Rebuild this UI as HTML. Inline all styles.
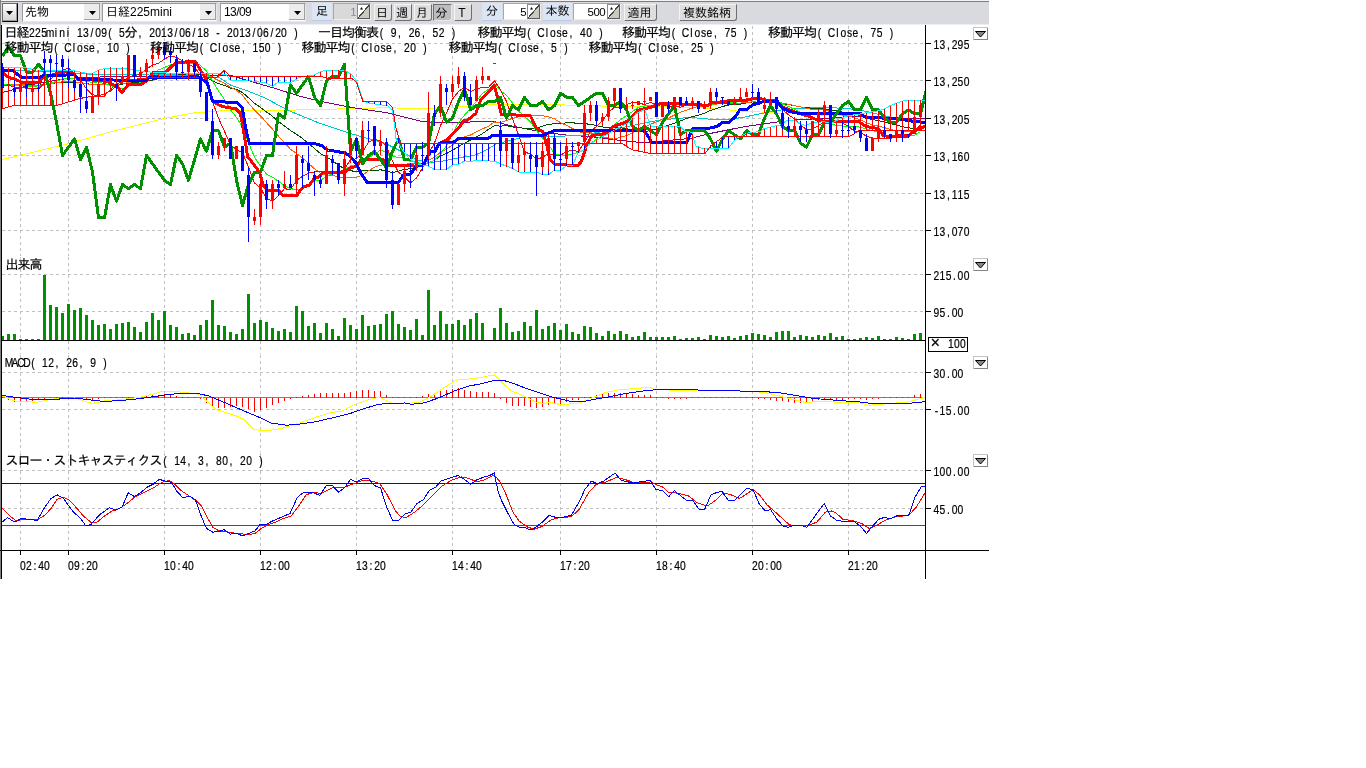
<!DOCTYPE html><html lang="ja"><head><meta charset="utf-8"><title>日経225mini チャート</title><style>
html,body{margin:0;padding:0;background:#fff;}
body{width:1366px;height:768px;overflow:hidden;position:relative;font-family:"Liberation Sans","IPAPGothic","Noto Sans CJK JP",sans-serif;}
svg{position:absolute;left:0;top:0;}
body>svg,#tb{will-change:transform;}
text.t{font-family:"Liberation Mono","IPAGothic","Noto Sans CJK JP",monospace;font-size:12px;fill:#000;stroke:#000;stroke-width:.2px;}
text.a{font-family:"Liberation Sans","IPAGothic",sans-serif;}
text.j{font-size:13px;}
#tb{position:absolute;left:0;top:0;width:989px;box-shadow:inset 1px 0 0 #808080;height:25px;background:linear-gradient(#f4f4f4 0,#f4f4f4 1px,#7d7d7d 1px,#7d7d7d 2px,#d8dadf 2px,#d8dadf 24px,#eceef1 24px,#eceef1 25px);box-sizing:border-box;font-size:12px;line-height:16px;color:#000;}
#tb div{position:absolute;box-sizing:border-box;white-space:nowrap;}
#tb div span{position:absolute;top:0;}
.btn0{background:linear-gradient(#fff,#d4d4d4);border:1px solid #6a6a6a;border-right-color:#000;border-bottom-color:#000;box-shadow:inset -1px -1px 0 #9a9a9a;}
svg.tri{position:absolute;}
.combo{background:#fff;border:1px solid #9a9a9a;border-right-color:#e8e8e8;border-bottom-color:#e8e8e8;}
.combo span{top:0.5px;font-size:12px;}
.combo .cb{position:absolute;right:0;top:0;width:16px;height:16px;background:#ececec;border-right:1px solid #a0a0a0;border-bottom:1px solid #a0a0a0;box-sizing:border-box;}
.lbl{top:3px;height:18px;background:#dbe5f3;border-bottom:1px solid #b9cbe6;}
.lbl span{top:1px;}
.spin{top:3px;height:17px;background:#fff;border:1px solid #a8a8a8;border-right-color:#eee;border-bottom-color:#eee;}
.spin.dis{background:#d9d9d9;color:#8c8c8c;}
.spin span{top:-1px;font-family:"Liberation Sans",sans-serif;letter-spacing:-.6px;font-size:11.5px;}
.spin .sb{position:absolute;right:0;top:0;width:13px;height:15px;box-sizing:border-box;border:1px solid #8a8a8a;border-right-color:#5a5a5a;border-bottom-color:#5a5a5a;
 background:linear-gradient(to bottom right,#fff 0,#fff 47%,#444 47%,#444 54%,#cbc8c0 54%,#cbc8c0 100%);}
.btn{top:4px;height:17px;background:#dedede;border:1px solid #f4f4f4;border-right:1px solid #6e6e6e;border-bottom:1px solid #6e6e6e;border-radius:0 0 3px 0;text-align:center;}
.btn span{left:0;right:2px;top:-2px;}
.btn.pr{background:#bdbdbd;border:1px solid #6e6e6e;border-right-color:#e8e8e8;border-bottom-color:#e8e8e8;}
</style></head><body><svg width="1366" height="768" viewBox="0 0 1366 768"><defs><clipPath id="cp"><rect x="2" y="25" width="923" height="525"/></clipPath></defs><g stroke="#c0c0c0" stroke-width="1" stroke-dasharray="3 3" shape-rendering="crispEdges">
<line x1="20.5" y1="26" x2="20.5" y2="256"/>
<line x1="20.5" y1="257" x2="20.5" y2="354"/>
<line x1="20.5" y1="355" x2="20.5" y2="452"/>
<line x1="20.5" y1="453" x2="20.5" y2="550"/>
<line x1="68.5" y1="26" x2="68.5" y2="256"/>
<line x1="68.5" y1="257" x2="68.5" y2="354"/>
<line x1="68.5" y1="355" x2="68.5" y2="452"/>
<line x1="68.5" y1="453" x2="68.5" y2="550"/>
<line x1="164.5" y1="26" x2="164.5" y2="256"/>
<line x1="164.5" y1="257" x2="164.5" y2="354"/>
<line x1="164.5" y1="355" x2="164.5" y2="452"/>
<line x1="164.5" y1="453" x2="164.5" y2="550"/>
<line x1="260.5" y1="26" x2="260.5" y2="256"/>
<line x1="260.5" y1="257" x2="260.5" y2="354"/>
<line x1="260.5" y1="355" x2="260.5" y2="452"/>
<line x1="260.5" y1="453" x2="260.5" y2="550"/>
<line x1="356.5" y1="26" x2="356.5" y2="256"/>
<line x1="356.5" y1="257" x2="356.5" y2="354"/>
<line x1="356.5" y1="355" x2="356.5" y2="452"/>
<line x1="356.5" y1="453" x2="356.5" y2="550"/>
<line x1="452.5" y1="26" x2="452.5" y2="256"/>
<line x1="452.5" y1="257" x2="452.5" y2="354"/>
<line x1="452.5" y1="355" x2="452.5" y2="452"/>
<line x1="452.5" y1="453" x2="452.5" y2="550"/>
<line x1="560.5" y1="26" x2="560.5" y2="256"/>
<line x1="560.5" y1="257" x2="560.5" y2="354"/>
<line x1="560.5" y1="355" x2="560.5" y2="452"/>
<line x1="560.5" y1="453" x2="560.5" y2="550"/>
<line x1="656.5" y1="26" x2="656.5" y2="256"/>
<line x1="656.5" y1="257" x2="656.5" y2="354"/>
<line x1="656.5" y1="355" x2="656.5" y2="452"/>
<line x1="656.5" y1="453" x2="656.5" y2="550"/>
<line x1="752.5" y1="26" x2="752.5" y2="256"/>
<line x1="752.5" y1="257" x2="752.5" y2="354"/>
<line x1="752.5" y1="355" x2="752.5" y2="452"/>
<line x1="752.5" y1="453" x2="752.5" y2="550"/>
<line x1="848.5" y1="26" x2="848.5" y2="256"/>
<line x1="848.5" y1="257" x2="848.5" y2="354"/>
<line x1="848.5" y1="355" x2="848.5" y2="452"/>
<line x1="848.5" y1="453" x2="848.5" y2="550"/>
<line x1="2" y1="43.5" x2="925" y2="43.5"/>
<line x1="2" y1="80.5" x2="925" y2="80.5"/>
<line x1="2" y1="118.5" x2="925" y2="118.5"/>
<line x1="2" y1="155.5" x2="925" y2="155.5"/>
<line x1="2" y1="193.5" x2="925" y2="193.5"/>
<line x1="2" y1="230.5" x2="925" y2="230.5"/>
<line x1="2" y1="274.5" x2="925" y2="274.5"/>
<line x1="2" y1="311.5" x2="925" y2="311.5"/>
<line x1="2" y1="372.5" x2="925" y2="372.5"/>
<line x1="2" y1="409.5" x2="925" y2="409.5"/>
<line x1="2" y1="470.5" x2="925" y2="470.5"/>
<line x1="2" y1="508.5" x2="925" y2="508.5"/>
</g>
<g shape-rendering="crispEdges" stroke-linejoin="round">
<polyline points="0,160 61.5,145.5 112.5,131.4 165.3,118.2 193.4,113 228.6,110.3 282.7,110.3 318,109.5 353,108.6 388,107.7 423.4,109 449.8,107.7 470,106 495,104.2 530,104.2 565.5,105 600.6,106 635.8,106.8 671,106.8 700,107.7 725,109.5 742.7,111.2 760.3,112 778,113 795.5,113.8 813,114.7 830.7,115.6 848.2,116 865.8,117.4 883.4,118.2 901,119 925,120" fill="none" stroke="#ffff00" stroke-width="1" />
<polyline points="0,93 35,84 67,78.5 100,77 150,76 200,75 230,75.2 247.6,80.4 272,87.5 300.3,96.3 321.4,101.5 353,107.7 388.2,113 405.8,117.4 423.4,121.8 446.3,122.6 477.6,121.8 495,121.8 512.7,126.2 539,131.4 565.5,135 591.9,136.7 618.2,140.2 635.8,142 653.4,142 671,140.2 690,138.5 707.6,134 725,130.5 742.7,127 760.3,124.4 778,121.8 795.5,120 813,119 830.7,118.2 848.2,116.5 865.8,116.5 883.4,117.4 901,118.2 925,119" fill="none" stroke="#800080" stroke-width="1" />
<polyline points="0,70 60,72 100,75 150,74 200,75 220,78 230,84.8 247.6,91 265.2,98 288,110.3 318,122.6 349.6,133.2 370.7,139.3 386,143.7 397,149.2 408,155.3 419,160.3 430,162.5 441,161.4 452,159.2 463.5,157 474.6,155.3 485.6,150.4 496.7,143.7 506,141.5 520,138 542,136 565,136 583,135 600,132 620,128 640,124 660,120 690,117.4 707.6,119 725,120 742.7,117.4 760.3,113.8 778,110.3 795.5,108.6 813,107.7 830.7,107.7 848.2,108.6 865.8,111.2 883.4,115.6 901,119 925,121.8" fill="none" stroke="#00c8c8" stroke-width="1" />
<polyline points="2.5,84.2 8.5,84.2 14.5,84.6 20.5,84.6 26.5,84.8 32.5,85 38.5,85.2 44.5,84.4 50.5,83.6 56.5,82.8 62.5,82.2 68.5,82.1 74.5,82.3 80.5,82.8 86.5,83.8 92.5,84.4 98.5,84.4 104.5,84.3 110.5,84.2 116.5,84.4 122.5,84.1 128.5,82.9 134.5,82.6 140.5,82.2 146.5,81.4 152.5,80 158.5,78.5 164.5,77 170.5,75.9 176.5,75.2 182.5,74.5 188.5,73.6 194.5,73.9 200.5,75 206.5,77.4 212.5,80.9 218.5,83.5 224.5,85.5 230.5,88 236.5,89.5 242.5,92.5 248.5,97.8 254.5,103.3 260.5,107.5 266.5,111.9 272.5,116.3 278.5,121.6 284.5,125.9 290.5,130.6 296.5,134.2 302.5,138.5 308.5,143.5 314.5,148.5 320.5,153.7 326.5,157 332.5,160.7 338.5,165.3 344.5,168.8 350.5,170.6 356.5,171.8 362.5,170.8 368.5,170.1 374.5,170.5 380.5,169.8 386.5,171.1 392.5,172.5 398.5,171.1 404.5,169.3 410.5,168.8 416.5,167 422.5,165.8 428.5,162.8 434.5,160.2 440.5,156 446.5,153.5 452.5,150.3 458.5,146.5 464.5,143.2 470.5,140 476.5,137 482.5,133.6 488.5,129.4 494.5,125.6 500.5,126.1 506.5,125.6 512.5,126.9 518.5,127.9 524.5,128.1 530.5,128.7 536.5,128.2 542.5,126.1 548.5,124.3 554.5,123.8 560.5,123.3 566.5,122.9 572.5,122.6 578.5,123.8 584.5,123.6 590.5,124.4 596.5,125.6 602.5,126.9 608.5,127.9 614.5,127.6 620.5,127.7 626.5,128.7 632.5,129.9 638.5,130.9 644.5,132.4 650.5,130.2 656.5,129.4 662.5,127.1 668.5,125.2 674.5,123.1 680.5,120.9 686.5,118.4 692.5,116.4 698.5,115.3 704.5,113.1 710.5,110.5 716.5,108.5 722.5,106.5 728.5,105 734.5,104.5 740.5,104.1 746.5,103 752.5,102 758.5,102.1 764.5,102.8 770.5,102.5 776.5,102.6 782.5,103.5 788.5,104.6 794.5,105.6 800.5,107 806.5,107.6 812.5,108.3 818.5,108.5 824.5,108.8 830.5,110 836.5,111 842.5,112.1 848.5,112.9 854.5,113.9 860.5,115.8 866.5,117.9 872.5,119.6 878.5,120.6 884.5,121.9 890.5,123.6 896.5,125.1 902.5,126.7 908.5,127.9 914.5,128.4 920.5,128.6" fill="none" stroke="#004c00" stroke-width="1" />
<polyline points="2.5,84.3 8.5,84.3 14.5,84.8 20.5,84.8 26.5,85 32.5,85.3 38.5,85.5 44.5,84.5 50.5,83.6 56.5,82.6 62.5,81.8 68.5,81.6 74.5,81.9 80.5,82.5 86.5,83.8 92.5,84.5 98.5,84.5 104.5,84.4 110.5,84.2 116.5,84.4 122.5,83.8 128.5,82.4 134.5,81.5 140.5,80.9 146.5,79.7 152.5,78 158.5,75.9 164.5,75.5 170.5,75.1 176.5,75.5 182.5,75.7 188.5,74.9 194.5,74.1 200.5,73.8 206.5,74.5 212.5,77.4 218.5,80.5 224.5,83.4 230.5,87.3 236.5,90.3 242.5,95 248.5,103.1 254.5,110.2 260.5,115.8 266.5,122.7 272.5,129.1 278.5,136.2 284.5,142.6 290.5,149.3 296.5,153.4 302.5,158 308.5,163.4 314.5,168.8 320.5,173.4 326.5,175 332.5,175.4 338.5,177.1 344.5,178.1 350.5,177.1 356.5,177.3 362.5,175.2 368.5,170.9 374.5,167.3 380.5,165.3 386.5,164.2 392.5,165.3 398.5,165.1 404.5,164.4 410.5,163.6 416.5,163.6 422.5,163.2 428.5,160.3 434.5,157.2 440.5,152.2 446.5,149.1 452.5,145.1 458.5,139.9 464.5,136.8 470.5,135.1 476.5,131.6 482.5,128.9 488.5,126.2 494.5,122 500.5,122.5 506.5,120.4 512.5,118.3 518.5,116.9 524.5,115.8 530.5,115.2 536.5,115.8 542.5,115.6 548.5,116.9 554.5,118.9 560.5,122.7 566.5,125.4 572.5,128.5 578.5,131.8 584.5,132.6 590.5,132.6 596.5,134.7 602.5,136.8 608.5,138 614.5,139.3 620.5,137.2 626.5,135.6 632.5,132.6 638.5,129.9 644.5,127.4 650.5,124.3 656.5,121.8 662.5,119.6 668.5,118.1 674.5,115 680.5,112.3 686.5,110.2 692.5,107.9 698.5,106.3 704.5,105.8 710.5,105.2 716.5,104 722.5,102.9 728.5,103.1 734.5,103.8 740.5,103.1 746.5,102.5 752.5,101.9 758.5,102.1 764.5,102.3 770.5,102.5 776.5,102.1 782.5,103.1 788.5,104.2 794.5,105.6 800.5,106.9 806.5,108.3 812.5,109.4 818.5,109.6 824.5,109.6 830.5,111.7 836.5,113.3 842.5,115 848.5,116.2 854.5,117.7 860.5,119.8 866.5,122.7 872.5,125 878.5,126.2 884.5,127.7 890.5,129.5 896.5,130.6 902.5,131 908.5,131.2 914.5,130.8 920.5,129.5" fill="none" stroke="#ff6000" stroke-width="1" />
<polyline points="2.5,84.5 8.5,84.6 14.5,85.5 20.5,85.6 26.5,86.1 32.5,86.6 38.5,87.1 44.5,85.1 50.5,83.1 56.5,81.1 62.5,79 68.5,78.6 74.5,78.2 80.5,79.5 86.5,81.5 92.5,82.4 98.5,81.9 104.5,83.6 110.5,85.3 116.5,87.8 122.5,88.6 128.5,86.1 134.5,84.9 140.5,82.4 146.5,77.8 152.5,73.6 158.5,69.9 164.5,67.4 170.5,64.9 176.5,63.2 182.5,62.8 188.5,63.7 194.5,63.2 200.5,65.3 206.5,71.1 212.5,81.1 218.5,91.1 224.5,99.4 230.5,109.8 236.5,117.3 242.5,127.2 248.5,142.6 254.5,157.2 260.5,166.3 266.5,174.2 272.5,177.1 278.5,181.3 284.5,185.8 290.5,188.7 296.5,189.6 302.5,188.7 308.5,184.2 314.5,180.4 320.5,180.4 326.5,175.9 332.5,173.8 338.5,173 344.5,170.5 350.5,165.5 356.5,165.1 362.5,161.7 368.5,157.6 374.5,154.3 380.5,150.1 386.5,152.6 392.5,156.7 398.5,157.2 404.5,158.4 410.5,161.7 416.5,162.1 422.5,164.6 428.5,163 434.5,160.1 440.5,154.3 446.5,145.5 452.5,133.5 458.5,122.7 464.5,115.2 470.5,108.5 476.5,101.1 482.5,93.2 488.5,89.4 494.5,84 500.5,90.7 506.5,95.2 512.5,103.1 518.5,111 524.5,116.4 530.5,121.8 536.5,130.6 542.5,138 548.5,144.3 554.5,153.8 560.5,154.7 566.5,155.5 572.5,153.8 578.5,152.6 584.5,148.9 590.5,143.4 596.5,138.9 602.5,135.6 608.5,131.8 614.5,124.7 620.5,119.8 626.5,115.6 632.5,111.5 638.5,107.3 644.5,106 650.5,105.2 656.5,104.8 662.5,103.6 668.5,104.4 674.5,105.2 680.5,104.8 686.5,104.8 692.5,104.4 698.5,105.2 704.5,105.6 710.5,105.2 716.5,103.1 722.5,102.3 728.5,101.9 734.5,102.3 740.5,101.5 746.5,100.2 752.5,99.4 758.5,99 764.5,99 770.5,99.8 776.5,101.1 782.5,104 788.5,106.5 794.5,109 800.5,112.3 806.5,116.4 812.5,119.3 818.5,120.2 824.5,120.2 830.5,123.5 836.5,125.6 842.5,126 848.5,126 854.5,126.4 860.5,127.2 866.5,128.9 872.5,130.6 878.5,132.2 884.5,135.1 890.5,135.6 896.5,135.6 902.5,136 908.5,136.4 914.5,135.1 920.5,131.8" fill="none" stroke="#00ff00" stroke-width="1" />
<polyline points="2.5,85 8.5,85.2 14.5,87 20.5,87.2 26.5,88.2 32.5,88.2 38.5,89 44.5,83.2 50.5,79 56.5,74.1 62.5,69.9 68.5,68.2 74.5,73.2 80.5,79.9 86.5,89 92.5,94.8 98.5,95.7 104.5,94 110.5,90.7 116.5,86.5 122.5,82.4 128.5,76.5 134.5,75.7 140.5,74.1 146.5,69.1 152.5,64.9 158.5,63.2 164.5,59.1 170.5,55.8 176.5,57.4 182.5,60.8 188.5,64.1 194.5,67.4 200.5,74.9 206.5,84.9 212.5,101.5 218.5,118.1 224.5,131.4 230.5,144.7 236.5,149.7 242.5,153 248.5,167.1 254.5,182.9 260.5,187.9 266.5,198.7 272.5,201.2 278.5,195.4 284.5,188.7 290.5,189.6 296.5,180.4 302.5,176.3 308.5,173 314.5,172.1 320.5,171.3 326.5,171.3 332.5,171.3 338.5,173 344.5,168.8 350.5,159.7 356.5,158.8 362.5,152.2 368.5,142.2 374.5,139.7 380.5,140.5 386.5,146.4 392.5,161.3 398.5,172.1 404.5,177.1 410.5,182.9 416.5,177.9 422.5,168 428.5,153.8 434.5,143 440.5,125.6 446.5,113.1 452.5,99 458.5,91.5 464.5,87.3 470.5,91.5 476.5,89 482.5,87.3 488.5,87.3 494.5,80.7 500.5,89.8 506.5,101.5 512.5,118.9 518.5,134.7 524.5,152.2 530.5,153.8 536.5,159.7 542.5,157.2 548.5,153.8 554.5,155.5 560.5,155.5 566.5,151.3 572.5,150.5 578.5,151.3 584.5,142.2 590.5,131.4 596.5,126.4 602.5,120.6 608.5,112.3 614.5,107.3 620.5,108.1 626.5,104.8 632.5,102.3 638.5,102.3 644.5,104.8 650.5,102.3 656.5,104.8 662.5,104.8 668.5,106.5 674.5,105.6 680.5,107.3 686.5,104.8 692.5,104 698.5,104 704.5,105.6 710.5,103.1 716.5,101.5 722.5,100.6 728.5,99.8 734.5,99 740.5,99.8 746.5,99 752.5,98.2 758.5,98.2 764.5,99 770.5,99.8 776.5,103.1 782.5,109.8 788.5,114.8 794.5,118.9 800.5,124.7 806.5,129.7 812.5,128.9 818.5,125.6 824.5,121.4 830.5,122.3 836.5,121.4 842.5,123.1 848.5,126.4 854.5,131.4 860.5,132.2 866.5,136.4 872.5,138 878.5,138 884.5,138.9 890.5,138.9 896.5,134.7 902.5,133.9 908.5,134.7 914.5,131.4 920.5,124.7" fill="none" stroke="#ff0000" stroke-width="1" />
<polyline points="0,73.5 3.5,73.5 8.8,77.5 15.8,79.5 22,82.5 38.7,82.5 43,77.5 51,75.5 59.8,72.5 70.3,71.5 73.8,73.5 78.2,79.5 105.5,80.5 112.5,84.5 117,86.5 122,92.5 128.4,84.5 140.7,84.5 146,81.5 153,72.5 165.3,72.5 175.8,62.5 195.3,61.5 200.7,70.5 205.5,78.5 207.1,82.5 212.6,101.5 219.8,105.5 226.8,107.5 235.6,108.5 240.5,113.5 244,133.5 247.6,156.5 254.6,165.5 259.6,172.5 263.4,185.5 267.8,190.5 279.2,190.5 282.7,195.5 296.8,195.5 300.3,190.5 303.8,186.5 309,185.5 314.4,178.5 319.7,176.5 323,172.5 344,172.5 351,167.5 356.6,166.5 361,159.5 383,159.5 388.2,165.5 412.9,165.5 415.6,167.5 418.4,165.5 423.8,164.5 427.5,156.5 431.1,151.5 434.8,151.5 439.3,143.5 441.1,142.5 447.5,139.5 460,126.5 463.8,120.5 467,120.5 475.8,113.5 481,99.5 488,92.5 494.3,85.5 497.8,98.5 501.3,114.5 530.3,115.5 536.5,128.5 542.6,131.5 547,145.5 549.7,159.5 555,164.5 577.8,165.5 581.3,161.5 586.6,145.5 591.9,135.5 606,133.5 613,126.5 625.3,122.5 631.4,117.5 637.6,110.5 653.4,106.5 660.4,103.5 697,104.5 707.6,105.5 711,102.5 725,102.5 732,100.5 746.3,100.5 753.3,98.5 760.3,98.5 767.4,100.5 776,100.5 781.4,106.5 788.5,109.5 799,113.5 809.6,116.5 818.4,120.5 827,121.5 858.8,121.5 865.8,126.5 878,128.5 883.4,135.5 888.7,136.5 908,136.5 913.3,131.5 925,126.5" fill="none" stroke="#ff0000" stroke-width="3" />
<polyline points="0,70.5 13,70.5 17.6,74.5 22,77.5 39.5,77.5 43,75.5 58,75.5 74,74.5 79,79.5 146,80.5 149.5,77.5 198.9,77.5 207.1,82.5 212.6,101.5 237,102.5 242.3,107.5 245.8,128.5 249.3,143.5 314.4,143.5 321.4,145.5 328.5,150.5 339,151.5 340,152.5 344.6,152.5 349.1,155.5 356.4,163.5 361,173.5 367.3,182.5 398.3,182.5 403.8,174.5 410.2,174.5 415.6,167.5 418.4,165.5 423.8,164.5 427.5,156.5 431.1,151.5 434.8,151.5 439.3,143.5 441.1,142.5 453,142.5 458.5,138.5 488,138.5 492.5,135.5 542.6,135.5 555,130.5 644.6,130.5 651.6,142.5 686.8,142.5 690,134.5 693,128.5 708,128.5 712,127.5 717.3,126.5 722,122.5 729,122.5 735.6,116.5 740,109.5 746.5,109.5 753,104.5 759,103.5 763,101.5 777.5,101.5 782,107.5 789.3,111.5 799.3,113.5 860.5,113.5 865.8,117.5 897.5,118.5 908,120.5 915,121.5 925,122.5" fill="none" stroke="#0000ff" stroke-width="3" />
<polyline points="2.5,55.8 8.5,47.5 14.5,55.8 20.5,55.8 26.5,72.4 32.5,72.4 38.5,64.1 44.5,72.4 50.5,93.2 56.5,122.3 62.5,155.5 68.5,147.2 74.5,138.9 80.5,159.7 86.5,147.2 92.5,172.1 98.5,217.8 104.5,217.8 110.5,184.6 116.5,201.2 122.5,184.6 128.5,188.7 134.5,184.6 140.5,188.7 146.5,155.5 152.5,163.8 158.5,172.1 164.5,180.4 170.5,184.6 176.5,155.5 182.5,163.8 188.5,180.4 194.5,159.7 200.5,138.9 206.5,151.3 212.5,130.6 218.5,130.6 224.5,147.2 230.5,143 236.5,180.4 242.5,205.4 248.5,184.6 254.5,172.1 260.5,172.1 266.5,155.5 272.5,155.5 278.5,113.9 284.5,118.1 290.5,84.9 296.5,93.2 302.5,84.9 308.5,76.5 314.5,97.3 320.5,105.6 326.5,80.7 332.5,76.5 338.5,76.5 344.5,64.1 350.5,151.3 356.5,138.9 362.5,163.8 368.5,155.5 374.5,151.3 380.5,159.7 386.5,168 392.5,151.3 398.5,138.9 404.5,159.7 410.5,159.7 416.5,147.2 422.5,147.2 428.5,143 434.5,113.9 440.5,105.6 446.5,122.3 452.5,118.1 458.5,101.5 464.5,89 470.5,109.8 476.5,105.6 482.5,105.6 488.5,101.5 494.5,101.5 500.5,97.3 506.5,118.1 512.5,105.6 518.5,109.8 524.5,97.3 530.5,105.6 536.5,105.6 542.5,101.5 548.5,109.8 554.5,105.6 560.5,93.2 566.5,97.3 572.5,97.3 578.5,105.6 584.5,101.5 590.5,97.3 596.5,93.2 602.5,93.2 608.5,105.6 614.5,105.6 620.5,101.5 626.5,109.8 632.5,126.4 638.5,130.6 644.5,126.4 650.5,130.6 656.5,134.7 662.5,122.3 668.5,113.9 674.5,105.6 680.5,134.7 686.5,130.6 692.5,130.6 698.5,130.6 704.5,130.6 710.5,138.9 716.5,151.3 722.5,138.9 728.5,130.6 734.5,134.7 740.5,138.9 746.5,130.6 752.5,134.7 758.5,134.7 764.5,118.1 770.5,105.6 776.5,113.9 782.5,126.4 788.5,130.6 794.5,130.6 800.5,143 806.5,147.2 812.5,134.7 818.5,134.7 824.5,122.3 830.5,122.3 836.5,113.9 842.5,105.6 848.5,101.5 854.5,109.8 860.5,109.8 866.5,97.3 872.5,109.8 878.5,109.8 884.5,118.1 890.5,122.3 896.5,122.3 902.5,113.9 908.5,109.8 914.5,113.9 920.5,113.9 926.5,89" fill="none" stroke="#009000" stroke-width="3" clip-path="url(#cp)"/>
<polyline points="0,67.5 25,67.5 35,70 60,70.2 75,71 85,73 93,73 100,69.5 109,68 123,68 141,71 155,72.5 176,73.4 211,73.4 220,74 226,74.6 230.1,80 248.8,80.5 260.6,82.3 266.1,82.8 272.5,86.4 277.9,82.3 291.6,82.3 298.9,77.3 304.4,76.4 313.5,75.5 320.8,71.4 326.2,70.5 344.3,70.2 351.3,74.3 356.6,81.3 363.6,101.5 370.7,103.3 388.2,106 392.6,110.3 396,138.5 400.4,147 408.1,157 415.9,163.6 428,165.9 434.7,169.7 446.3,169.7 452.4,164.7 458.5,164.2 464.6,160.9 470.7,161.4 476.8,160.3 495,161.3 500.4,163.8 512.2,168.3 518.6,172 536.8,172 542.3,174.7 548.7,174.7 554.1,170.1 560.5,170.1 566.9,165.6 572.4,165.6 577.8,152.8 585.1,149.2 589.7,143.7 593.6,142 606,135 618.2,128 628.8,122.6 635.8,113.8 644.6,109.5 650.8,126.2 679.8,126.2 685,131.4 692,132.3 695.3,145.5 700.5,148 728.7,148 735.7,138.5 746.3,133.2 760.3,131.4 763.8,128.8 774.4,126.2 777.5,125.6 781.1,124.7 785.7,121 794.8,120 799.3,123.7 805.7,125.6 810,123.7 813,122.6 823.6,121.8 832,123 839.8,118.7 848,115.6 858.3,114.3 866,112.8 877.9,110.9 884.7,108.9 890.5,105.5 902.3,101.1 908,100.1 925,100.1" fill="none" stroke="#00ffff" stroke-width="1" />
<path d="M2.5 67.5V108.7M8.5 67.5V106.9M14.5 67.5V105.3M20.5 67.5V105.3M26.5 67.9V105.3M32.5 69.4V105.3M38.5 70V105.3M44.5 70.1V105.3M50.5 70.1V105.3M56.5 70.2V105.3M62.5 70.3V103.8M68.5 70.7V102M74.5 71V100.2M80.5 72.1V98.4M86.5 73V97.3M92.5 73V96.5M98.5 70.2V96.5M104.5 68.8V96.1M110.5 68V89.4M116.5 68V84.1M122.5 68V81.6M128.5 68.9V79.8M134.5 69.9V79.3M140.5 70.9V78.7M146.5 71.6V78.1M152.5 72.2V77.8M158.5 72.7V77.8M164.5 72.9V77.8M170.5 73.2V77.8M176.5 73.4V77.8M182.5 73.4V77.8M188.5 73.4V77.8M194.5 73.4V77.8M200.5 73.4V77.8M206.5 73.4V77.8M212.5 73.5V77.8M218.5 73.9V75.9M314.5 74.9V76.4M320.5 71.6V76.4M326.5 70.5V78.2M332.5 70.4V78.2M338.5 70.3V78.2M344.5 70.3V78.2M350.5 73.8V78.2M362.5 98.3V100.9M596.5 140.4V143.4M602.5 137V143.4M608.5 133.6V143.4M614.5 130.1V143.4M620.5 126.8V143.4M626.5 123.8V146.3M632.5 117.9V149.9M638.5 112.5V151.1M644.5 109.5V152.3M650.5 125.4V153.4M656.5 126.2V153.4M662.5 126.2V153.4M668.5 126.2V153.4M674.5 126.2V153.4M680.5 126.9V153.4M686.5 131.6V153.4M692.5 134.3V153.4M698.5 147V153.4M704.5 148V153.4M746.5 133.2V136.6M752.5 132.4V136.6M758.5 131.6V136.6M764.5 128.6V136.6M770.5 127.2V136.6M776.5 125.8V136.5M782.5 123.6V136.5M788.5 120.7V136.5M794.5 120V136.5M800.5 124.1V136.5M806.5 125.2V136.4M812.5 122.8V136.4M818.5 122.2V136.4M824.5 121.9V136.4M830.5 122.8V136.4M836.5 120.5V136.3M842.5 117.7V136.3M848.5 115.5V136.3M854.5 114.8V133.5M860.5 113.9V130.1M866.5 112.7V130.1M872.5 111.8V130.1M878.5 110.7V130.1M884.5 109V130.1M890.5 105.5V130.1M896.5 103.3V130.1M902.5 101.1V130.1M908.5 100.1V130.1M914.5 100.1V130.1M920.5 100.1V130.1" stroke="#ff0000" stroke-width="1" fill="none"/>
<path d="M224.5 70.2V74.4M230.5 76.4V80M236.5 76.4V80.2M242.5 76.4V80.3M248.5 76.4V80.5M254.5 76.4V81.4M260.5 76.4V82.3M266.5 76.4V83M272.5 76.4V86.4M278.5 76.4V82.3M284.5 76.4V82.3M290.5 76.4V82.3M296.5 76.4V78.9M368.5 101.5V102.7M374.5 101.5V103.9M380.5 101.5V104.8M386.5 101.5V105.7M392.5 107.6V110.2M398.5 136.6V143.3M404.5 143.5V152.3M410.5 143.5V159M416.5 143.5V163.7M422.5 143.5V164.9M428.5 143.5V166.2M434.5 143.5V169.6M440.5 143.5V169.7M446.5 143.5V169.5M452.5 143.5V164.7M458.5 143.5V164.2M464.5 143.5V161M470.5 143.5V161.4M476.5 143.5V160.4M482.5 143.5V160.6M488.5 143.5V160.9M494.5 143.5V161.3M500.5 143.5V163.8M506.5 143.5V166.1M512.5 143.4V168.5M518.5 143.4V171.9M524.5 143.4V172M530.5 143.4V172M536.5 143.4V172M542.5 143.4V174.7M548.5 143.4V174.7M554.5 143.4V170.1M560.5 143.4V170.1M566.5 143.4V165.9M572.5 143.4V165.4M578.5 143.4V152.5M584.5 143.4V149.5M710.5 146.2V148M716.5 141.6V148M722.5 137.3V148M728.5 136.7V148M734.5 136.7V140.1" stroke="#0000ff" stroke-width="1" fill="none"/>
<polyline points="0,109.4 14,105.3 57.4,105.3 75,100 80.8,98.3 91.4,96.5 104.2,96.5 109,90.7 117,83.7 126.5,80 150,77.8 215,77.8 218,76.4 224.4,70.1 229.9,76.4 320.8,76.4 326.2,78.2 351.3,78.2 356.6,82.2 362.7,101.5 386.5,101.5 392.6,107.7 396,128 400.5,143.5 621.8,143.4 632.3,149.9 649.9,153.4 705,153.4 711,145.5 723.4,136.7 849.5,136.3 853.4,134.3 858.3,130.9 860.3,130.1 925,130.1" fill="none" stroke="#ff0000" stroke-width="1" />
<path d="M8.5 80V92M20.5 84V97M32.5 88V97M92.5 97V113M98.5 80V105M104.5 76V88M110.5 67V92M122.5 67V84M128.5 55V80M140.5 67V80M146.5 59V76M152.5 47V67M158.5 47V59M188.5 59V80M218.5 142V159M224.5 138V151M236.5 146V159M254.5 209V225M260.5 171V225M272.5 180V209M284.5 171V188M296.5 146V196M326.5 146V184M344.5 151V196M350.5 138V163M362.5 121V155M380.5 130V155M398.5 184V205M404.5 167V192M416.5 151V171M428.5 92V159M440.5 76V117M452.5 76V97M458.5 67V88M476.5 76V101M482.5 67V84M488.5 76V80M494.5 63V63M506.5 138V167M518.5 142V171M524.5 142V171M542.5 142V171M548.5 134V171M566.5 138V163M578.5 142V151M584.5 105V146M590.5 101V121M602.5 113V126M608.5 97V121M614.5 88V105M626.5 97V109M632.5 101V109M638.5 101V105M644.5 88V105M650.5 97V101M662.5 105V117M674.5 97V109M692.5 97V109M704.5 101V109M710.5 88V109M734.5 97V105M740.5 88V101M746.5 88V97M764.5 97V113M770.5 92V105M794.5 117V134M812.5 121V138M818.5 109V121M824.5 101V121M836.5 126V134M872.5 138V151M878.5 130V142M896.5 130V142M914.5 117V134M920.5 105V117" stroke="#ff0000" stroke-width="1" fill="none"/>
<path d="M2.5 63V88M14.5 80V97M26.5 84V97M38.5 84V92M44.5 51V76M50.5 55V80M56.5 55V72M62.5 55V80M68.5 59V88M74.5 80V92M80.5 84V113M86.5 80V113M116.5 84V101M134.5 55V80M164.5 42V59M170.5 47V63M176.5 55V80M182.5 59V72M194.5 63V76M200.5 72V97M206.5 92V121M212.5 109V159M230.5 138V159M242.5 146V171M248.5 167V242M266.5 180V209M278.5 180V196M290.5 175V188M302.5 155V188M308.5 146V180M314.5 171V196M320.5 175V188M332.5 155V175M338.5 163V184M356.5 138V159M368.5 121V142M374.5 126V155M386.5 138V188M392.5 171V209M410.5 163V188M422.5 142V171M434.5 105V126M446.5 84V105M464.5 72V101M470.5 84V105M500.5 121V167M512.5 138V167M530.5 142V171M536.5 142V196M554.5 134V171M560.5 142V171M572.5 142V163M596.5 101V126M620.5 88V113M656.5 92V117M668.5 101V113M680.5 97V105M686.5 97V105M698.5 101V113M716.5 88V101M722.5 97V105M728.5 101V105M752.5 84V97M758.5 88V105M776.5 97V113M782.5 109V130M788.5 117V138M800.5 121V142M806.5 121V142M830.5 105V138M842.5 121V138M848.5 117V134M854.5 126V134M860.5 130V142M866.5 134V151M884.5 126V138M890.5 134V142M902.5 130V142M908.5 134V138" stroke="#0000ff" stroke-width="1" fill="none"/>
<path d="M7 84h3V85h-3zM19 84h3V92h-3zM31 88h3V92h-3zM91 97h3V113h-3zM97 84h3V97h-3zM103 80h3V84h-3zM109 80h3V84h-3zM121 76h3V80h-3zM127 55h3V80h-3zM139 72h3V76h-3zM145 63h3V72h-3zM151 55h3V59h-3zM157 47h3V55h-3zM187 63h3V72h-3zM217 146h3V155h-3zM223 138h3V146h-3zM235 146h3V159h-3zM253 217h3V221h-3zM259 184h3V217h-3zM271 184h3V200h-3zM283 184h3V188h-3zM295 155h3V184h-3zM325 155h3V184h-3zM343 159h3V184h-3zM349 138h3V155h-3zM361 130h3V155h-3zM379 142h3V146h-3zM397 184h3V205h-3zM403 171h3V184h-3zM415 155h3V167h-3zM427 113h3V155h-3zM439 84h3V113h-3zM451 84h3V92h-3zM457 76h3V84h-3zM475 80h3V101h-3zM481 76h3V80h-3zM487 76h3V80h-3zM493 63h3V64h-3zM505 138h3V151h-3zM517 155h3V163h-3zM523 151h3V155h-3zM541 151h3V167h-3zM547 138h3V151h-3zM565 146h3V159h-3zM577 142h3V146h-3zM583 113h3V142h-3zM589 105h3V113h-3zM601 117h3V121h-3zM607 101h3V117h-3zM613 88h3V101h-3zM625 105h3V109h-3zM631 105h3V106h-3zM637 101h3V105h-3zM643 101h3V102h-3zM649 97h3V101h-3zM661 105h3V117h-3zM673 97h3V109h-3zM691 101h3V105h-3zM703 105h3V109h-3zM709 92h3V105h-3zM733 101h3V105h-3zM739 97h3V101h-3zM745 92h3V97h-3zM763 105h3V109h-3zM769 101h3V105h-3zM793 126h3V130h-3zM811 121h3V134h-3zM817 113h3V121h-3zM823 105h3V113h-3zM835 130h3V134h-3zM871 138h3V151h-3zM877 130h3V138h-3zM895 130h3V138h-3zM913 117h3V134h-3zM919 105h3V117h-3z" fill="#ff0000"/>
<path d="M1 67h3V88h-3zM13 88h3V92h-3zM25 84h3V88h-3zM37 88h3V89h-3zM43 59h3V63h-3zM49 59h3V63h-3zM55 63h3V64h-3zM61 59h3V67h-3zM67 72h3V80h-3zM73 80h3V88h-3zM79 84h3V97h-3zM85 101h3V109h-3zM115 84h3V88h-3zM133 55h3V76h-3zM163 47h3V55h-3zM169 51h3V55h-3zM175 59h3V72h-3zM181 72h3V73h-3zM193 63h3V72h-3zM199 76h3V92h-3zM205 92h3V121h-3zM211 121h3V155h-3zM229 138h3V159h-3zM241 146h3V171h-3zM247 175h3V217h-3zM265 184h3V200h-3zM277 184h3V188h-3zM289 184h3V188h-3zM301 159h3V163h-3zM307 163h3V171h-3zM313 175h3V180h-3zM319 180h3V184h-3zM331 159h3V163h-3zM337 163h3V180h-3zM355 138h3V151h-3zM367 130h3V131h-3zM373 126h3V146h-3zM385 142h3V180h-3zM391 180h3V205h-3zM409 171h3V172h-3zM421 155h3V156h-3zM433 113h3V117h-3zM445 88h3V92h-3zM463 76h3V97h-3zM469 97h3V105h-3zM499 130h3V151h-3zM511 138h3V163h-3zM529 155h3V159h-3zM535 155h3V167h-3zM553 138h3V159h-3zM559 159h3V160h-3zM571 146h3V147h-3zM595 105h3V121h-3zM619 88h3V109h-3zM655 92h3V117h-3zM667 105h3V109h-3zM679 97h3V105h-3zM685 101h3V105h-3zM697 101h3V109h-3zM715 92h3V97h-3zM721 97h3V98h-3zM727 101h3V105h-3zM751 92h3V93h-3zM757 92h3V105h-3zM775 97h3V109h-3zM781 113h3V126h-3zM787 126h3V130h-3zM799 126h3V130h-3zM805 130h3V134h-3zM829 105h3V134h-3zM841 130h3V131h-3zM847 130h3V131h-3zM853 126h3V130h-3zM859 130h3V138h-3zM865 138h3V151h-3zM883 130h3V134h-3zM889 134h3V138h-3zM901 130h3V134h-3zM907 134h3V135h-3z" fill="#0000ff"/>
</g>
<g shape-rendering="crispEdges">
<path d="M1 340h3v-4h-3zM7 340h3v-6h-3zM13 340h3v-6h-3zM19 340h3v-1h-3zM25 340h3v-1h-3zM31 340h3v-1h-3zM37 340h3v-1h-3zM43 340h3v-65h-3zM49 340h3v-35h-3zM55 340h3v-33h-3zM61 340h3v-27h-3zM67 340h3v-36h-3zM73 340h3v-30h-3zM79 340h3v-32h-3zM85 340h3v-25h-3zM91 340h3v-20h-3zM97 340h3v-15h-3zM103 340h3v-16h-3zM109 340h3v-11h-3zM115 340h3v-16h-3zM121 340h3v-17h-3zM127 340h3v-18h-3zM133 340h3v-13h-3zM139 340h3v-8h-3zM145 340h3v-18h-3zM151 340h3v-27h-3zM157 340h3v-20h-3zM163 340h3v-29h-3zM169 340h3v-15h-3zM175 340h3v-13h-3zM181 340h3v-6h-3zM187 340h3v-7h-3zM193 340h3v-5h-3zM199 340h3v-15h-3zM205 340h3v-20h-3zM211 340h3v-40h-3zM217 340h3v-15h-3zM223 340h3v-14h-3zM229 340h3v-8h-3zM235 340h3v-6h-3zM241 340h3v-11h-3zM247 340h3v-46h-3zM253 340h3v-17h-3zM259 340h3v-20h-3zM265 340h3v-18h-3zM271 340h3v-12h-3zM277 340h3v-9h-3zM283 340h3v-11h-3zM289 340h3v-8h-3zM295 340h3v-34h-3zM301 340h3v-29h-3zM307 340h3v-14h-3zM313 340h3v-17h-3zM319 340h3v-7h-3zM325 340h3v-17h-3zM331 340h3v-11h-3zM337 340h3v-4h-3zM343 340h3v-22h-3zM349 340h3v-15h-3zM355 340h3v-11h-3zM361 340h3v-25h-3zM367 340h3v-14h-3zM373 340h3v-15h-3zM379 340h3v-16h-3zM385 340h3v-26h-3zM391 340h3v-29h-3zM397 340h3v-16h-3zM403 340h3v-13h-3zM409 340h3v-10h-3zM415 340h3v-21h-3zM421 340h3v-5h-3zM427 340h3v-50h-3zM433 340h3v-15h-3zM439 340h3v-29h-3zM445 340h3v-16h-3zM451 340h3v-16h-3zM457 340h3v-20h-3zM463 340h3v-15h-3zM469 340h3v-21h-3zM475 340h3v-27h-3zM481 340h3v-17h-3zM493 340h3v-12h-3zM499 340h3v-32h-3zM505 340h3v-17h-3zM511 340h3v-8h-3zM517 340h3v-9h-3zM523 340h3v-18h-3zM529 340h3v-14h-3zM535 340h3v-30h-3zM541 340h3v-11h-3zM547 340h3v-14h-3zM553 340h3v-17h-3zM559 340h3v-10h-3zM565 340h3v-16h-3zM571 340h3v-8h-3zM577 340h3v-6h-3zM583 340h3v-14h-3zM589 340h3v-13h-3zM595 340h3v-7h-3zM601 340h3v-4h-3zM607 340h3v-9h-3zM613 340h3v-6h-3zM619 340h3v-9h-3zM625 340h3v-6h-3zM631 340h3v-3h-3zM637 340h3v-4h-3zM643 340h3v-8h-3zM649 340h3v-3h-3zM655 340h3v-3h-3zM661 340h3v-3h-3zM667 340h3v-3h-3zM673 340h3v-4h-3zM679 340h3v-1h-3zM685 340h3v-2h-3zM691 340h3v-2h-3zM697 340h3v-3h-3zM703 340h3v-1h-3zM709 340h3v-5h-3zM715 340h3v-4h-3zM721 340h3v-3h-3zM727 340h3v-4h-3zM733 340h3v-2h-3zM739 340h3v-4h-3zM745 340h3v-5h-3zM751 340h3v-7h-3zM757 340h3v-6h-3zM763 340h3v-5h-3zM769 340h3v-3h-3zM775 340h3v-8h-3zM781 340h3v-9h-3zM787 340h3v-9h-3zM793 340h3v-3h-3zM799 340h3v-5h-3zM805 340h3v-4h-3zM811 340h3v-3h-3zM817 340h3v-5h-3zM823 340h3v-4h-3zM829 340h3v-7h-3zM835 340h3v-3h-3zM841 340h3v-4h-3zM847 340h3v-1h-3zM853 340h3v-1h-3zM859 340h3v-2h-3zM865 340h3v-3h-3zM871 340h3v-2h-3zM877 340h3v-4h-3zM883 340h3v-1h-3zM889 340h3v-1h-3zM895 340h3v-3h-3zM901 340h3v-2h-3zM907 340h3v-1h-3zM913 340h3v-6h-3zM919 340h3v-7h-3z" fill="#009000"/>
<rect x="2" y="340" width="923" height="1" fill="#000"/>
</g>
<g shape-rendering="crispEdges">
<rect x="2" y="397" width="923" height="1" fill="#808080"/>
<path d="M2.5 396.5v1M8.5 397.5v2M14.5 397.5v4M20.5 397.5v3M26.5 397.5v3M32.5 397.5v3M38.5 397.5v2M44.5 397.5v1M50.5 396.5v1M56.5 397.5v-1M62.5 396.5v1M68.5 396.5v1M74.5 396.5v1M80.5 397.5v1M86.5 397.5v2M92.5 397.5v3M98.5 397.5v1M104.5 396.5v1M110.5 397.5v-1M116.5 397.5v-1M122.5 397.5v-1M128.5 397.5v-1M134.5 397.5v-1M140.5 397.5v-1M146.5 397.5v-2M152.5 397.5v-3M158.5 397.5v-3M164.5 397.5v-4M170.5 397.5v-3M176.5 397.5v-2M182.5 397.5v-1M188.5 397.5v-1M194.5 396.5v1M200.5 397.5v1M206.5 397.5v5M212.5 397.5v9M218.5 397.5v10M224.5 397.5v10M230.5 397.5v9M236.5 397.5v8M242.5 397.5v9M248.5 397.5v11M254.5 397.5v14M260.5 397.5v12M266.5 397.5v10M272.5 397.5v7M278.5 397.5v5M284.5 397.5v3M290.5 397.5v1M296.5 396.5v1M302.5 397.5v-2M308.5 397.5v-3M314.5 397.5v-4M320.5 397.5v-5M326.5 397.5v-5M332.5 397.5v-5M338.5 397.5v-5M344.5 397.5v-5M350.5 397.5v-6M356.5 397.5v-7M362.5 397.5v-8M368.5 397.5v-8M374.5 397.5v-7M380.5 397.5v-7M386.5 397.5v-3M392.5 396.5v1M398.5 396.5v1M404.5 396.5v1M410.5 397.5v-1M416.5 397.5v-1M422.5 397.5v-2M428.5 397.5v-4M434.5 397.5v-5M440.5 397.5v-7M446.5 397.5v-8M452.5 397.5v-9M458.5 397.5v-10M464.5 397.5v-8M470.5 397.5v-7M476.5 397.5v-6M482.5 397.5v-6M488.5 397.5v-6M494.5 397.5v-5M500.5 397.5v1M506.5 397.5v5M512.5 397.5v8M518.5 397.5v8M524.5 397.5v8M530.5 397.5v9M536.5 397.5v10M542.5 397.5v9M548.5 397.5v7M554.5 397.5v6M560.5 397.5v6M566.5 397.5v4M572.5 397.5v2M578.5 397.5v2M584.5 396.5v1M590.5 397.5v-1M596.5 397.5v-3M602.5 397.5v-4M608.5 397.5v-5M614.5 397.5v-5M620.5 397.5v-5M626.5 397.5v-4M632.5 397.5v-4M638.5 397.5v-3M644.5 397.5v-3M650.5 397.5v-3M656.5 396.5v1M662.5 396.5v1M668.5 397.5v1M674.5 397.5v1M680.5 397.5v1M686.5 397.5v1M692.5 396.5v1M698.5 396.5v1M704.5 396.5v1M710.5 396.5v1M716.5 396.5v1M722.5 396.5v1M728.5 396.5v1M734.5 396.5v1M740.5 396.5v1M746.5 396.5v1M752.5 396.5v1M758.5 397.5v1M764.5 397.5v1M770.5 397.5v2M776.5 397.5v3M782.5 397.5v3M788.5 397.5v4M794.5 397.5v5M800.5 397.5v5M806.5 397.5v5M812.5 397.5v4M818.5 397.5v2M824.5 397.5v2M830.5 397.5v2M836.5 397.5v2M842.5 397.5v2M848.5 397.5v1M854.5 397.5v1M860.5 397.5v1M866.5 397.5v2M872.5 397.5v1M878.5 397.5v1M884.5 396.5v1M890.5 396.5v1M896.5 397.5v-1M902.5 397.5v-1M908.5 397.5v-1M914.5 397.5v-3M920.5 397.5v-4" stroke="#ff0000" stroke-width="1" fill="none"/>
<polyline points="2.5,396 15,401 37,402.3 55,398.5 75,398 92,403.5 104.5,401 119.5,399.8 139.4,397.3 154.3,393.6 164.3,391 184,392.3 199,394.3 206.6,401 216.5,409.7 236.5,416 244,419.7 254,429.6 266.3,430.9 281.3,428.4 298.7,423.4 316,417.2 330,412.7 342.4,411 357.3,403.5 369.8,399.3 379.7,397.3 392.2,403.5 404.6,403.5 419.6,402.3 429.5,397.3 444.5,387.3 456.9,379.9 474.3,378.6 494.2,374.9 504.2,384.8 511.7,391 524,396 536.5,402.3 544,403.5 549,402.3 561.4,404.8 578.9,403 593.8,397.3 606.2,392.3 618.7,389.8 633.6,388.6 650,387.3 655,389.8 689.8,390.3 739.6,391 764.5,392.3 779.4,396 794.3,399.8 806.8,402.8 819.2,401 839,402.3 859,402.8 869,405.3 889,403.5 906.3,402.3 916.3,399.8 925,397.3" fill="none" stroke="#ffff00" stroke-width="1" />
<polyline points="2.5,395.5 15,397.3 35,399.8 55,399.3 75,398 89.6,399.8 104.5,401.5 129.4,399.8 149.3,397.3 169.3,394.3 184,393.3 199,393.8 209,396 224,402.3 244,411 259,417.2 271.3,423 286.2,425.2 298.7,424.2 316,421.7 335,417.2 350,413.5 364.8,408.5 374.8,405.3 384.7,403.5 404.6,403 412,404.3 424.5,402.8 437,398.5 454.4,391 469.3,386 481.8,383.6 494.2,380.4 504.2,380.6 514,383.6 526.6,388.6 539,392.8 551.5,396.8 564,399.8 571.4,401.5 583.8,401.5 593.8,399.3 606.2,397.3 618.7,394.8 633.6,392.3 648.6,390.3 665,389.3 689.8,389.8 739.6,391 764.5,391.6 779.4,392.8 794.3,395.3 814.2,398.5 839,400.5 864,402.3 871.5,403.5 901.3,403.5 916.3,402.8 925,401.5" fill="none" stroke="#0000ff" stroke-width="1" />
</g>
<g shape-rendering="crispEdges">
<rect x="2" y="483" width="923" height="1" fill="#0000ff"/>
<rect x="2" y="525" width="923" height="1" fill="#ff0000"/>
<polyline points="2.5,508.5 10,516 16.2,520.9 22.4,519.2 37.3,519.7 44.8,515.2 51,508.5 57.2,499.3 63.5,497.3 69.7,500.5 75.9,507.2 83.4,516 90.8,522.2 97,522.2 104.5,516 112,511 119.5,508.5 127,503.5 134.4,497.3 144.4,492.3 154.3,487.3 161.8,482.4 169.3,480.4 174.2,483.6 181.7,491 189.2,496 196.6,501 201.6,506 207.8,518.4 212.8,527.2 219,530.9 229,532.1 236.5,533.4 248.9,534.6 255,533.4 261.4,528.4 267.6,524.7 273.8,522.9 283.7,518.4 291.2,516 298.7,506 306.2,494.8 313.6,492.3 321,493.6 332.4,487.8 342.4,487.8 352.4,484.3 362.3,480.4 372.3,481.1 379.7,483.6 387.2,494.8 394.7,509.7 399.6,516 405.9,517.7 414.6,512.2 422,506 432,496 442,486.1 451.9,479.9 461.9,476.9 469.3,478.6 476.8,481.9 484.3,479.9 494.2,474.9 500.5,482.4 506.7,496 512.9,512.2 519,520.9 526.6,526.7 534,529.2 541.5,526.7 551.5,519.7 559,517.7 571.4,516.7 578.9,509.7 588.8,492.3 596.3,484.3 606.2,481.9 616.2,477.4 626.2,479.9 633.6,482.4 640,482.9 651.2,481.9 657.4,485.3 662.4,486.8 668.6,492.3 677.3,493.1 688.5,496 697.2,502.8 707.2,506 714.7,501 723.4,492.8 730.9,494.8 739.6,498.5 747,493.6 753.3,489.8 759.5,494.8 767,504.8 776.9,513.5 789.3,524.7 796.8,525.9 806.8,525.9 816.7,522.2 825.4,512.2 831.6,511 836.6,513.5 842.9,519.2 854,520.9 861.5,523.4 869,528.4 876.5,525.4 885,520.4 893.9,517.2 908.8,515.2 916.3,507.2 925,492.8" fill="none" stroke="#ff0000" stroke-width="1" />
<polyline points="2.5,521.7 7.5,517.7 15,522.2 21,518.4 37.3,520.4 44.8,507.2 51,498.5 57.2,494.8 63.5,498.5 69.7,507.2 74.7,513.5 79.6,517.2 85.9,525.9 90.8,524.7 99.6,514.7 109.5,507.7 115.7,510.2 122,507.2 128.2,492.8 134.4,496.5 140.6,492.8 146.9,487.3 153,484.3 159.3,479.4 165.5,481.1 171.7,482.4 176.7,491 183,498 189.2,496 195.4,499.8 201.6,517.2 206.6,528.4 212.8,532.1 219,531.6 224,529.6 230.2,534.1 236.5,533.4 242.7,535.9 248.9,533.4 255,530.9 260,524.7 266.3,524.2 273.8,520.4 290,513.5 297.4,497.3 303.7,492.3 313.6,492.8 319.8,495.3 326.2,485.6 332.4,485.6 338.7,492.3 344.9,487.3 350.4,479.4 356.6,481.9 362.8,478.6 368.5,478.6 374.3,485.6 380.5,487.8 386.7,507.2 392.7,520.4 398.9,520.4 404.6,514.2 410.9,512.2 417,503.5 423.3,499.8 429.5,490.3 435.7,487.3 440.7,481.1 453.2,476.9 458,475.6 464.4,479.4 470.6,484.3 476.8,479.9 483,477.4 489.3,475.6 494.2,473.1 498,491 501.7,501 508,513.5 514,524.2 519,527.2 525.3,527.7 531,530.1 536.5,526.7 542.8,521.7 549,515.5 555.2,517.2 561.4,517.7 571.4,515.2 578.9,502.3 585,489.3 591.3,481.1 597.5,483.6 603.7,481.1 615,473.1 621.2,480.4 633.6,483.1 640,481.9 650,480.4 656.2,489.8 662.4,490.3 668.6,496.8 674.3,490.6 681,496 686.8,500.5 692.8,500.5 699,509.2 704.7,509.2 711,494.8 717.2,492.3 722,491.6 728.4,500.5 734.6,500.5 747,488 753.3,490.3 759,503.5 765.2,511 770.7,509.7 776.9,519.2 783,525.9 788,527.2 794.3,525.2 800.5,525.4 806.8,527.2 824.2,503.5 830.4,516 836.6,520.2 842.9,521.4 854,521.4 860.3,525.9 866.5,533.4 872.7,525.9 879,519.2 885,517.2 890,519 897.6,515.5 908.8,515.2 915,497.3 921.3,486.6 925,486.6" fill="none" stroke="#0000ff" stroke-width="1" />
</g>
<g shape-rendering="crispEdges" fill="#000">
<rect x="0" y="0" width="1" height="579" fill="#808080"/>
<rect x="1" y="25" width="1" height="554"/>
<rect x="925" y="24" width="1" height="555"/>
<rect x="0" y="550" width="989" height="1"/>
<rect x="20" y="551" width="1" height="4"/>
<rect x="68" y="551" width="1" height="4"/>
<rect x="164" y="551" width="1" height="4"/>
<rect x="260" y="551" width="1" height="4"/>
<rect x="356" y="551" width="1" height="4"/>
<rect x="452" y="551" width="1" height="4"/>
<rect x="560" y="551" width="1" height="4"/>
<rect x="656" y="551" width="1" height="4"/>
<rect x="752" y="551" width="1" height="4"/>
<rect x="848" y="551" width="1" height="4"/>
<rect x="926" y="43" width="5" height="1"/>
<rect x="926" y="80" width="5" height="1"/>
<rect x="926" y="118" width="5" height="1"/>
<rect x="926" y="155" width="5" height="1"/>
<rect x="926" y="193" width="5" height="1"/>
<rect x="926" y="230" width="5" height="1"/>
<rect x="926" y="274" width="5" height="1"/>
<rect x="926" y="311" width="5" height="1"/>
<rect x="926" y="372" width="5" height="1"/>
<rect x="926" y="409" width="5" height="1"/>
<rect x="926" y="470" width="5" height="1"/>
<rect x="926" y="508" width="5" height="1"/>
</g>
<text class="t a" transform="translate(933.5 49) scale(0.86 1)" x="0.15 7.13 15.77 21.08 28.06 35.04" xml:space="preserve">13,295</text>
<text class="t a" transform="translate(933.5 86) scale(0.86 1)" x="0.15 7.13 15.77 21.08 28.06 35.04" xml:space="preserve">13,250</text>
<text class="t a" transform="translate(933.5 124) scale(0.86 1)" x="0.15 7.13 15.77 21.08 28.06 35.04" xml:space="preserve">13,205</text>
<text class="t a" transform="translate(933.5 161) scale(0.86 1)" x="0.15 7.13 15.77 21.08 28.06 35.04" xml:space="preserve">13,160</text>
<text class="t a" transform="translate(933.5 199) scale(0.86 1)" x="0.15 7.13 15.77 21.08 28.06 35.04" xml:space="preserve">13,115</text>
<text class="t a" transform="translate(933.5 236) scale(0.86 1)" x="0.15 7.13 15.77 21.08 28.06 35.04" xml:space="preserve">13,070</text>
<text class="t a" transform="translate(933.5 280) scale(0.86 1)" x="0.15 7.13 14.11 22.75 28.06 35.04" xml:space="preserve">215.00</text>
<text class="t a" transform="translate(933.5 317) scale(0.86 1)" x="0.15 7.13 15.77 21.08 28.06" xml:space="preserve">95.00</text>
<text class="t a" transform="translate(933.5 378) scale(0.86 1)" x="0.15 7.13 15.77 21.08 28.06" xml:space="preserve">30.00</text>
<text class="t a" transform="translate(933.5 415) scale(0.86 1)" x="1.49 7.13 14.11 22.75 28.06 35.04" xml:space="preserve">-15.00</text>
<text class="t a" transform="translate(933.5 476) scale(0.86 1)" x="0.15 7.13 14.11 22.75 28.06 35.04" xml:space="preserve">100.00</text>
<text class="t a" transform="translate(933.5 514) scale(0.86 1)" x="0.15 7.13 15.77 21.08 28.06" xml:space="preserve">45.00</text>
<text class="t a" transform="translate(20 570) scale(0.86 1)" x="0.15 7.13 15.77 21.08 28.06" xml:space="preserve">02:40</text>
<text class="t a" transform="translate(68 570) scale(0.86 1)" x="0.15 7.13 15.77 21.08 28.06" xml:space="preserve">09:20</text>
<text class="t a" transform="translate(164 570) scale(0.86 1)" x="0.15 7.13 15.77 21.08 28.06" xml:space="preserve">10:40</text>
<text class="t a" transform="translate(260 570) scale(0.86 1)" x="0.15 7.13 15.77 21.08 28.06" xml:space="preserve">12:00</text>
<text class="t a" transform="translate(356 570) scale(0.86 1)" x="0.15 7.13 15.77 21.08 28.06" xml:space="preserve">13:20</text>
<text class="t a" transform="translate(452 570) scale(0.86 1)" x="0.15 7.13 15.77 21.08 28.06" xml:space="preserve">14:40</text>
<text class="t a" transform="translate(560 570) scale(0.86 1)" x="0.15 7.13 15.77 21.08 28.06" xml:space="preserve">17:20</text>
<text class="t a" transform="translate(656 570) scale(0.86 1)" x="0.15 7.13 15.77 21.08 28.06" xml:space="preserve">18:40</text>
<text class="t a" transform="translate(752 570) scale(0.86 1)" x="0.15 7.13 15.77 21.08 28.06" xml:space="preserve">20:00</text>
<text class="t a" transform="translate(848 570) scale(0.86 1)" x="0.15 7.13 15.77 21.08 28.06" xml:space="preserve">21:20</text>
<text class="t j" x="4.5 16.5" y="37">日経</text><text class="t a" transform="translate(29 37) scale(0.86 1)" x="0.15 7.13 14.11 19.42 30.06 35.04 44.02 50.66 55.97 62.94 71.59 76.90 83.87 92.19 99.49 104.80" xml:space="preserve">225mini 13/09( 5</text><text class="t j" x="124.5" y="37">分</text><text class="t a" transform="translate(137 37) scale(0.86 1)" x="1.82 8.80 14.11 21.08 28.06 35.04 43.68 48.99 55.97 64.61 69.92 76.90 85.54 92.19 99.49 104.80 111.78 118.76 125.73 134.38 139.69 146.66 155.31 160.62 167.59 176.24 182.89" xml:space="preserve">, 2013/06/18 - 2013/06/20 )</text>
<text class="t j" x="318 330 342 354 366" y="37">一目均衡表</text><text class="t a" transform="translate(378.5 37) scale(0.86 1)" x="1.49 8.80 14.11 22.75 29.73 35.04 42.01 50.66 57.63 62.94 69.92 78.56 85.21" xml:space="preserve">( 9, 26, 52 )</text>
<text class="t j" x="477.5 489.5 501.5 513.5" y="37">移動平均</text><text class="t a" transform="translate(526 37) scale(0.86 1)" x="1.49 8.80 13.11 23.09 28.06 35.37 42.01 50.66 57.63 62.94 69.92 78.56 85.21" xml:space="preserve">( Close, 40 )</text>
<text class="t j" x="622 634 646 658" y="37">移動平均</text><text class="t a" transform="translate(670.5 37) scale(0.86 1)" x="1.49 8.80 13.11 23.09 28.06 35.37 42.01 50.66 57.63 62.94 69.92 78.56 85.21" xml:space="preserve">( Close, 75 )</text>
<text class="t j" x="768 780 792 804" y="37">移動平均</text><text class="t a" transform="translate(816.5 37) scale(0.86 1)" x="1.49 8.80 13.11 23.09 28.06 35.37 42.01 50.66 57.63 62.94 69.92 78.56 85.21" xml:space="preserve">( Close, 75 )</text>
<text class="t j" x="4.5 16.5 28.5 40.5" y="51.5">移動平均</text><text class="t a" transform="translate(53 51.5) scale(0.86 1)" x="1.49 8.80 13.11 23.09 28.06 35.37 42.01 50.66 57.63 62.94 69.92 78.56 85.21" xml:space="preserve">( Close, 10 )</text>
<text class="t j" x="150 162 174 186" y="51.5">移動平均</text><text class="t a" transform="translate(198.5 51.5) scale(0.86 1)" x="1.49 8.80 13.11 23.09 28.06 35.37 42.01 50.66 57.63 62.94 69.92 76.90 85.54 92.19" xml:space="preserve">( Close, 150 )</text>
<text class="t j" x="301.5 313.5 325.5 337.5" y="51.5">移動平均</text><text class="t a" transform="translate(350 51.5) scale(0.86 1)" x="1.49 8.80 13.11 23.09 28.06 35.37 42.01 50.66 57.63 62.94 69.92 78.56 85.21" xml:space="preserve">( Close, 20 )</text>
<text class="t j" x="448.5 460.5 472.5 484.5" y="51.5">移動平均</text><text class="t a" transform="translate(497 51.5) scale(0.86 1)" x="1.49 8.80 13.11 23.09 28.06 35.37 42.01 50.66 57.63 62.94 71.59 78.23" xml:space="preserve">( Close, 5 )</text>
<text class="t j" x="588.5 600.5 612.5 624.5" y="51.5">移動平均</text><text class="t a" transform="translate(637 51.5) scale(0.86 1)" x="1.49 8.80 13.11 23.09 28.06 35.37 42.01 50.66 57.63 62.94 69.92 78.56 85.21" xml:space="preserve">( Close, 25 )</text>
<text class="t j" x="5.5 17.5 29.5" y="269">出来高</text>
<text class="t a" transform="translate(6 367) scale(0.86 1)" x="-1.51 6.46 13.11 20.09 29.40 36.70 42.01 48.99 57.63 64.61 69.92 76.90 85.54 92.52 97.83 106.47 113.12" xml:space="preserve">MACD( 12, 26, 9 )</text>
<text class="t j" x="5.5 17.5 29.5 41.5 53.5 65.5 77.5 89.5 101.5 113.5 125.5 137.5 149.5" y="465">スロー・ストキャスティクス</text><text class="t a" transform="translate(162 465) scale(0.86 1)" x="1.49 8.80 14.11 21.08 29.73 36.70 42.01 50.66 57.63 62.94 69.92 78.56 85.54 90.85 97.83 106.47 113.12" xml:space="preserve">( 14, 3, 80, 20 )</text>
<rect x="928.5" y="337.5" width="39" height="14" fill="#fff" stroke="#000" stroke-width="1" shape-rendering="crispEdges"/>
<text class="t" y="348" xml:space="preserve"><tspan x="930.5" font-size="16">×</tspan></text><text class="t a" transform="translate(948 348) scale(.86 1)" x="0.15 7.13 14.1">100</text>
<rect x="973.5" y="27.5" width="14" height="12" fill="#fff" stroke="#c4c4c4" shape-rendering="crispEdges"/>
<path d="M987.5 27.5 v12 h-14" fill="none" stroke="#858585" shape-rendering="crispEdges"/>
<path d="M975.5 31.5 h10 l-5 5.5z" fill="#858585" stroke="#000" stroke-width="1" stroke-linejoin="miter"/>
<rect x="973.5" y="258.5" width="14" height="12" fill="#fff" stroke="#c4c4c4" shape-rendering="crispEdges"/>
<path d="M987.5 258.5 v12 h-14" fill="none" stroke="#858585" shape-rendering="crispEdges"/>
<path d="M975.5 262.5 h10 l-5 5.5z" fill="#858585" stroke="#000" stroke-width="1" stroke-linejoin="miter"/>
<rect x="973.5" y="356.5" width="14" height="12" fill="#fff" stroke="#c4c4c4" shape-rendering="crispEdges"/>
<path d="M987.5 356.5 v12 h-14" fill="none" stroke="#858585" shape-rendering="crispEdges"/>
<path d="M975.5 360.5 h10 l-5 5.5z" fill="#858585" stroke="#000" stroke-width="1" stroke-linejoin="miter"/>
<rect x="973.5" y="454.5" width="14" height="12" fill="#fff" stroke="#c4c4c4" shape-rendering="crispEdges"/>
<path d="M987.5 454.5 v12 h-14" fill="none" stroke="#858585" shape-rendering="crispEdges"/>
<path d="M975.5 458.5 h10 l-5 5.5z" fill="#858585" stroke="#000" stroke-width="1" stroke-linejoin="miter"/></svg><div id="tb"><div class="btn0" style="left:2px;top:3px;width:16px;height:19px"></div><svg class="tri" style="left:6.0px;top:10.5px" width="7" height="4" viewBox="0 0 7 4"><path d="M0 0h7l-3.5 4z" fill="#000"/></svg><div class="combo" style="left:22px;top:3px;width:79px;height:19px"><span style="left:2px">先物</span><b class="cb"></b></div><svg class="tri" style="left:88.5px;top:10.5px" width="7" height="4" viewBox="0 0 7 4"><path d="M0 0h7l-3.5 4z" fill="#000"/></svg><div class="combo" style="left:102px;top:3px;width:115px;height:19px"><span style="left:3px">日経225mini</span><b class="cb"></b></div><svg class="tri" style="left:204.5px;top:10.5px" width="7" height="4" viewBox="0 0 7 4"><path d="M0 0h7l-3.5 4z" fill="#000"/></svg><div class="combo" style="left:220px;top:3px;width:86px;height:19px"><span style="left:3px"><span style="position:static;letter-spacing:-.6px">13/09</span></span><b class="cb"></b></div><svg class="tri" style="left:293.5px;top:10.5px" width="7" height="4" viewBox="0 0 7 4"><path d="M0 0h7l-3.5 4z" fill="#000"/></svg><div class="lbl" style="left:312px;width:20px"><span style="left:4px">足</span></div><div class="spin dis" style="left:333px;width:38px"><span style="right:14px">1</span><b class="sb"><svg width="11" height="13" viewBox="0 0 11 13" style="position:absolute;left:0;top:0"><path d="M2 4.5l1.5-2.5l1.5 2.5z" fill="#000"/></svg></b></div><div class="btn" style="left:374px;width:18px"><span>日</span></div><div class="btn" style="left:394px;width:18px"><span>週</span></div><div class="btn" style="left:414px;width:18px"><span>月</span></div><div class="btn pr" style="left:433px;width:19px"><span>分</span></div><div class="btn" style="left:454px;width:18px"><span>T</span></div><div class="lbl" style="left:482px;width:20px"><span style="left:4px">分</span></div><div class="spin" style="left:503px;width:38px"><span style="right:14px">5</span><b class="sb"><svg width="11" height="13" viewBox="0 0 11 13" style="position:absolute;left:0;top:0"><path d="M2 4.5l1.5-2.5l1.5 2.5z" fill="#000"/></svg></b></div><div class="lbl" style="left:543px;width:29px"><span style="left:2.5px">本数</span></div><div class="spin" style="left:573px;width:48px"><span style="right:15px">500</span><b class="sb"><svg width="11" height="13" viewBox="0 0 11 13" style="position:absolute;left:0;top:0"><path d="M2 4.5l1.5-2.5l1.5 2.5z" fill="#000"/></svg></b></div><div class="btn" style="left:624px;width:33px"><span>適用</span></div><div class="btn" style="left:679px;width:58px"><span>複数銘柄</span></div></div></body></html>
